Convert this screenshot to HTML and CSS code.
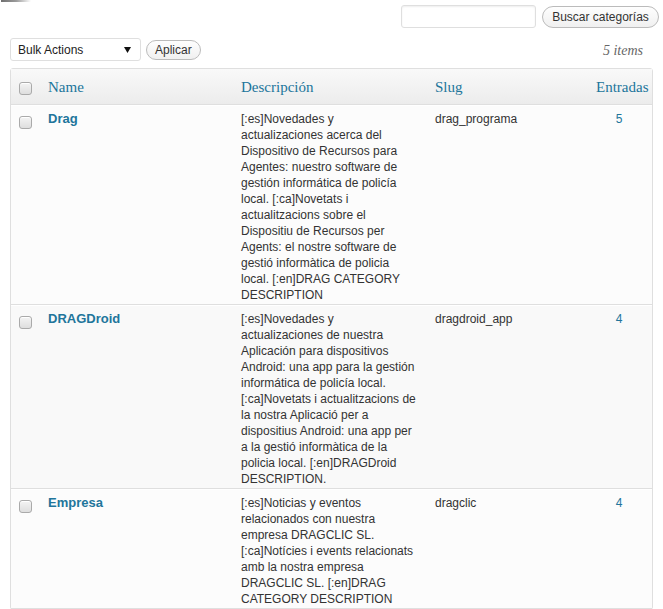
FILE: index.html
```html
<!DOCTYPE html>
<html lang="es">
<head>
<meta charset="utf-8">
<title>Categorías</title>
<link rel="stylesheet" href="styles.css">
</head>
<body>
<div class="corner"></div>
<div class="search-box">
  <input class="search-input" type="text" aria-label="Buscar categorías">
  <button class="button search-btn" type="button">Buscar categorías</button>
</div>
<div class="tablenav">
  <div class="select-wrap">
    <select class="bulk"><option>Bulk Actions</option></select>
    <svg class="arrow" width="7" height="6" viewBox="0 0 7 6"><path d="M0 0H7L3.5 6Z" fill="#111"/></svg>
  </div>
  <button class="button apply-btn" type="button">Aplicar</button>
  <span class="displaying-num">5 items</span>
</div>
<table class="widefat">
  <thead>
    <tr>
      <th class="col-cb"><input class="cb" type="checkbox"></th>
      <th class="col-name"><a href="#">Name</a></th>
      <th class="col-desc"><a href="#">Descripción</a></th>
      <th class="col-slug"><a href="#">Slug</a></th>
      <th class="col-posts"><a href="#">Entradas</a></th>
    </tr>
  </thead>
  <tbody>
    <tr class="alternate">
      <td class="cell-cb"><input class="cb" type="checkbox"></td>
      <td class="cell-name"><a class="row-title" href="#">Drag</a></td>
      <td class="cell-desc">[:es]Novedades y actualizaciones acerca del Dispositivo de Recursos para Agentes: nuestro software de gestión informática de policía local. [:ca]Novetats i actualitzacions sobre el Dispositiu de Recursos per Agents: el nostre software de gestió informàtica de policia local. [:en]DRAG CATEGORY DESCRIPTION</td>
      <td class="cell-slug">drag_programa</td>
      <td class="cell-posts"><a href="#">5</a></td>
    </tr>
    <tr>
      <td class="cell-cb"><input class="cb" type="checkbox"></td>
      <td class="cell-name"><a class="row-title" href="#">DRAGDroid</a></td>
      <td class="cell-desc">[:es]Novedades y actualizaciones de nuestra Aplicación para dispositivos Android: una app para la gestión informática de policía local. [:ca]Novetats i actualitzacions de la nostra Aplicació per a dispositius Android: una app per a la gestió informàtica de la policia local. [:en]DRAGDroid DESCRIPTION.</td>
      <td class="cell-slug">dragdroid_app</td>
      <td class="cell-posts"><a href="#">4</a></td>
    </tr>
    <tr class="alternate">
      <td class="cell-cb"><input class="cb" type="checkbox"></td>
      <td class="cell-name"><a class="row-title" href="#">Empresa</a></td>
      <td class="cell-desc">[:es]Noticias y eventos relacionados con nuestra empresa DRAGCLIC SL. [:ca]Notícies i events relacionats amb la nostra empresa DRAGCLIC SL. [:en]DRAG CATEGORY DESCRIPTION</td>
      <td class="cell-slug">dragclic</td>
      <td class="cell-posts"><a href="#">4</a></td>
    </tr>
  </tbody>
</table>
</body>
</html>
```
FILE: styles.css
```css
* { box-sizing: border-box; }
html, body { margin: 0; padding: 0; background: #fff; }
body {
  font-family: "Liberation Sans", Arial, sans-serif;
  font-size: 12px;
  color: #333;
  width: 663px;
  overflow: hidden;
}
a { color: #21759b; text-decoration: none; }

.corner {
  width: 30px;
  height: 2px;
  margin-left: 1px;
  background: linear-gradient(to right, #6f6f6f, #9a9a9a 50%, rgba(200,200,200,0));
}

.search-box {
  display: flex;
  justify-content: flex-end;
  align-items: flex-start;
  gap: 6px;
  margin-top: 3px;
  padding-right: 4px;
}
.search-input {
  width: 135px;
  height: 23px;
  border: 1px solid #dfdfdf;
  border-radius: 3px;
  background: #fff;
  box-shadow: inset 0 1px 2px rgba(0,0,0,0.07);
  margin: 0;
  padding: 0 4px;
  font: 12px "Liberation Sans", Arial, sans-serif;
}
.button {
  height: 22px;
  margin: 0;
  padding: 0 9px;
  border: 1px solid #bbb;
  border-radius: 11px;
  background: linear-gradient(to bottom, #fefefe, #f0f0f0);
  color: #333;
  font: 12px/20px "Liberation Sans", Arial, sans-serif;
  white-space: nowrap;
}
.search-btn { margin-top: 1px; width: 117px; }

.tablenav {
  display: flex;
  align-items: flex-start;
  margin: 11px 0 0 10px;
  padding-right: 20px;
  height: 22px;
}
.select-wrap { position: relative; width: 131px; height: 23px; margin-top: -1px; }
.bulk {
  -webkit-appearance: none;
  appearance: none;
  width: 131px;
  height: 23px;
  margin: 0;
  padding: 1px 0 0 7px;
  border: 1px solid #dfdfdf;
  border-radius: 3px;
  background: #fff;
  color: #222;
  font: 12px "Liberation Sans", Arial, sans-serif;
}
.arrow { position: absolute; right: 10px; top: 9px; }
.apply-btn {
  margin: 1px 0 0 5px;
  height: 20px;
  line-height: 18px;
  padding: 0 8px;
}
.displaying-num {
  margin-left: auto;
  padding-top: 1px;
  font: italic 14px/22px "Liberation Serif", Georgia, serif;
  color: #666;
}

.widefat {
  margin: 7px 0 0 10px;
  width: 643px;
  table-layout: fixed;
  border-collapse: separate;
  border-spacing: 0;
  border: 1px solid #dfdfdf;
  border-radius: 3px;
  background: #f9f9f9;
}
.widefat th {
  text-align: left;
  font: normal 15px/20px "Liberation Serif", Georgia, serif;
  padding: 8px 10px 7px;
  background: linear-gradient(to top, #ececec, #f9f9f9);
  border-bottom: 1px solid #dfdfdf;
  vertical-align: top;
  white-space: nowrap;
}
.widefat th a { color: #21759b; }
.col-cb { width: 27px; }
.col-name { width: 193px; }
.col-desc { width: 194px; }
.col-slug { width: 161px; }
.col-posts { width: 66px; }
.widefat th.col-cb { padding: 13px 0 0 8px; }

.cb {
  -webkit-appearance: none;
  appearance: none;
  display: block;
  width: 13px;
  height: 13px;
  margin: 0;
  border: 1px solid #aaa;
  border-radius: 3px;
  background: linear-gradient(to bottom, #f4f4f4, #dedede);
  box-shadow: inset 0 1px 0 #fff;
}

.widefat td {
  vertical-align: top;
  line-height: 16px;
  padding: 5px 10px 1px;
  border-top: 1px solid #fff;
  border-bottom: 1px solid #dfdfdf;
  color: #333;
}
.widefat tr.alternate td { background: #fcfcfc; }
.widefat td.cell-cb { padding: 10px 0 0 8px; }
.widefat td.cell-desc { padding-right: 6px; }
.row-title { font-weight: bold; font-size: 13px; }
.widefat td.cell-posts { text-align: center; }
```
